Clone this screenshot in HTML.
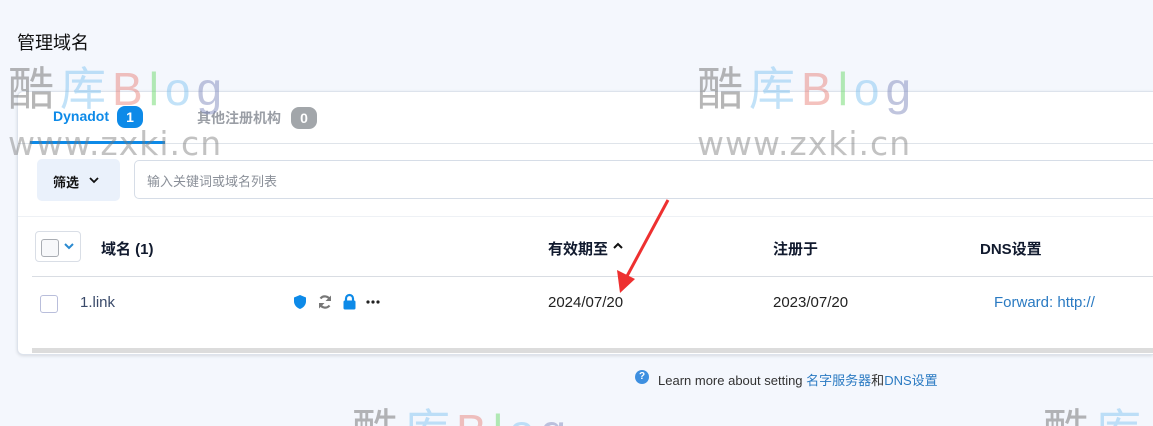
<!DOCTYPE html>
<html><head><meta charset="utf-8"><style>
*{margin:0;padding:0;box-sizing:border-box}
html,body{width:1153px;height:426px;overflow:hidden}
body{background:#f4f7fd;font-family:"Liberation Sans","Noto Sans CJK SC",sans-serif;position:relative;color:#1c2333}
.a{position:absolute}
.clip{position:absolute;left:0;top:0;width:1153px;height:426px;overflow:hidden}
.card{left:17px;top:91px;width:1136px;height:264px;background:#fff;border:1px solid #dde3ec;border-right:none;border-radius:6px 0 0 6px;box-shadow:0 1px 3px rgba(0,0,0,.12)}
.wm1{font-size:46px;line-height:1;white-space:nowrap;font-family:"Liberation Sans","Noto Sans CJK SC",sans-serif;letter-spacing:6px}
.wm2{font-size:33px;color:rgba(120,120,120,.45);letter-spacing:1px;white-space:nowrap;font-family:"DejaVu Sans",sans-serif}
.badge{height:22px;border-radius:8px;color:#fff;font-weight:bold;font-size:14px;text-align:center;line-height:22px;width:26px}
.th{font-weight:bold;font-size:15px;color:#111a2e}
.td{font-size:15px;color:#222}
</style></head><body><div class="clip">
<div class="a" style="left:17px;top:29px;font-size:18px;color:#111">管理域名</div>
<div class="a card"></div>
<div class="a" style="left:18px;top:143px;width:1135px;height:1px;background:#dfe4ea"></div>
<div class="a" style="left:53px;top:108px;font-size:14px;font-weight:bold;color:#0d8ae8">Dynadot</div>
<div class="a badge" style="left:117px;top:106px;background:#0d8ae8">1</div>
<div class="a" style="left:30px;top:141px;width:135px;height:3px;background:#0d8ae8"></div>
<div class="a" style="left:197px;top:108px;font-size:14px;font-weight:bold;color:#9a9ea5">其他注册机构</div>
<div class="a badge" style="left:291px;top:107px;background:#a2a6aa">0</div>
<div class="a" style="left:37px;top:159px;width:83px;height:42px;background:#eaf1fb;border-radius:5px"></div>
<div class="a" style="left:53px;top:172px;font-size:13px;font-weight:bold;color:#111">筛选</div>
<svg class="a" style="left:88px;top:175px" width="12" height="10"><path d="M2 3l4 4 4-4" stroke="#111" stroke-width="1.8" fill="none"/></svg>
<div class="a" style="left:134px;top:160px;width:1030px;height:39px;border:1px solid #d6dde7;border-radius:5px"></div>
<div class="a" style="left:147px;top:171px;font-size:13px;color:#8a8f98">输入关键词或域名列表</div>
<div class="a" style="left:18px;top:216px;width:1135px;height:1px;background:#eef1f5"></div>
<div class="a" style="left:35px;top:231px;width:46px;height:31px;border:1px solid #d9dee6;border-radius:4px"></div>
<div class="a" style="left:41px;top:239px;width:18px;height:18px;border:1px solid #a9adb3;border-radius:3px;background:#f7f8fa"></div>
<svg class="a" style="left:63px;top:241px" width="12" height="10"><path d="M2 3l4 4 4-4" stroke="#2a8ad0" stroke-width="2" fill="none"/></svg>
<div class="a th" style="left:101px;top:238px">域名 (1)</div>
<div class="a th" style="left:548px;top:238px">有效期至</div>
<svg class="a" style="left:612px;top:241px" width="12" height="10"><path d="M2 7l4-4 4 4" stroke="#111" stroke-width="2" fill="none"/></svg>
<div class="a th" style="left:773px;top:238px">注册于</div>
<div class="a th" style="left:980px;top:238px">DNS设置</div>
<div class="a" style="left:32px;top:276px;width:1121px;height:1px;background:#d9dde3"></div>
<div class="a" style="left:40px;top:295px;width:18px;height:18px;border:1px solid #b9bedb;border-radius:3px"></div>
<div class="a td" style="left:80px;top:294px;color:#3a4a6a">1.link</div>
<svg class="a" style="left:292px;top:294px" width="16" height="16"><path d="M8 1L2 3.5v4C2 11 5 14 8 15c3-1 6-4 6-7.5v-4z" fill="#0d8ae8"/></svg>
<svg class="a" style="left:317px;top:294px" width="16" height="16"><path d="M13 6A5.5 5.5 0 0 0 3.5 4.5M3 10a5.5 5.5 0 0 0 9.5 1.5" stroke="#777" stroke-width="2.2" fill="none"/><path d="M14 1.5v5.5H8.5zM2 14.5V9h5.5z" fill="#777"/></svg>
<svg class="a" style="left:342px;top:293px" width="15" height="17"><path d="M4 8V5.5a3.5 3.5 0 0 1 7 0V8" stroke="#0d8ae8" stroke-width="2.2" fill="none"/><rect x="1.5" y="7.5" width="12" height="9" rx="1.5" fill="#0d8ae8"/></svg>
<svg class="a" style="left:366px;top:300px" width="14" height="4"><circle cx="2" cy="2" r="1.6" fill="#222"/><circle cx="7" cy="2" r="1.6" fill="#222"/><circle cx="12" cy="2" r="1.6" fill="#222"/></svg>
<div class="a td" style="left:548px;top:294px">2024/07/20</div>
<div class="a td" style="left:773px;top:294px">2023/07/20</div>
<div class="a td" style="left:994px;top:294px;color:#2a7ac2">Forward: http://</div>
<div class="a" style="left:32px;top:348px;width:1121px;height:5px;background:#dcdcdc"></div>
<div class="a" style="left:635px;top:370px;width:14px;height:14px;border-radius:50%;background:#3d8fe0;color:#fff;font-size:10px;font-weight:bold;text-align:center;line-height:14px">?</div>
<div class="a" style="left:658px;top:370px;font-size:13px;color:#333">Learn more about setting <span style="color:#2a7ac2">名字服务器</span>和<span style="color:#2a7ac2">DNS设置</span></div>
<svg class="a" style="left:600px;top:190px" width="80" height="110"><path d="M68 10L26 88" stroke="#ee3030" stroke-width="3"/><path d="M20 103L17 80L35 89z" fill="#ee3030"/></svg>
<div class="a wm1" style="left:8px;top:66px"><span style="color:rgba(110,110,110,.5)">酷</span><span style="color:rgba(120,190,240,.45)">库</span><span style="color:rgba(230,120,110,.45)">B</span><span style="color:rgba(120,220,120,.55)">l</span><span style="color:rgba(120,190,240,.45)">o</span><span style="color:rgba(130,140,190,.5)">g</span></div>
<div class="a wm2" style="left:8px;top:124px">www.zxki.cn</div>
<div class="a wm1" style="left:697px;top:66px"><span style="color:rgba(110,110,110,.5)">酷</span><span style="color:rgba(120,190,240,.45)">库</span><span style="color:rgba(230,120,110,.45)">B</span><span style="color:rgba(120,220,120,.55)">l</span><span style="color:rgba(120,190,240,.45)">o</span><span style="color:rgba(130,140,190,.5)">g</span></div>
<div class="a wm2" style="left:697px;top:124px">www.zxki.cn</div>
<div class="a" style="left:352px;top:408px;width:300px;height:18px;overflow:hidden"><div class="wm1"><span style="color:rgba(110,110,110,.5)">酷</span><span style="color:rgba(120,190,240,.45)">库</span><span style="color:rgba(230,120,110,.45)">B</span><span style="color:rgba(120,220,120,.55)">l</span><span style="color:rgba(120,190,240,.45)">o</span><span style="color:rgba(130,140,190,.5)">g</span></div></div>
<div class="a" style="left:1043px;top:408px;width:110px;height:18px;overflow:hidden"><div class="wm1"><span style="color:rgba(110,110,110,.5)">酷</span><span style="color:rgba(120,190,240,.45)">库</span></div></div>
</div></body></html>
